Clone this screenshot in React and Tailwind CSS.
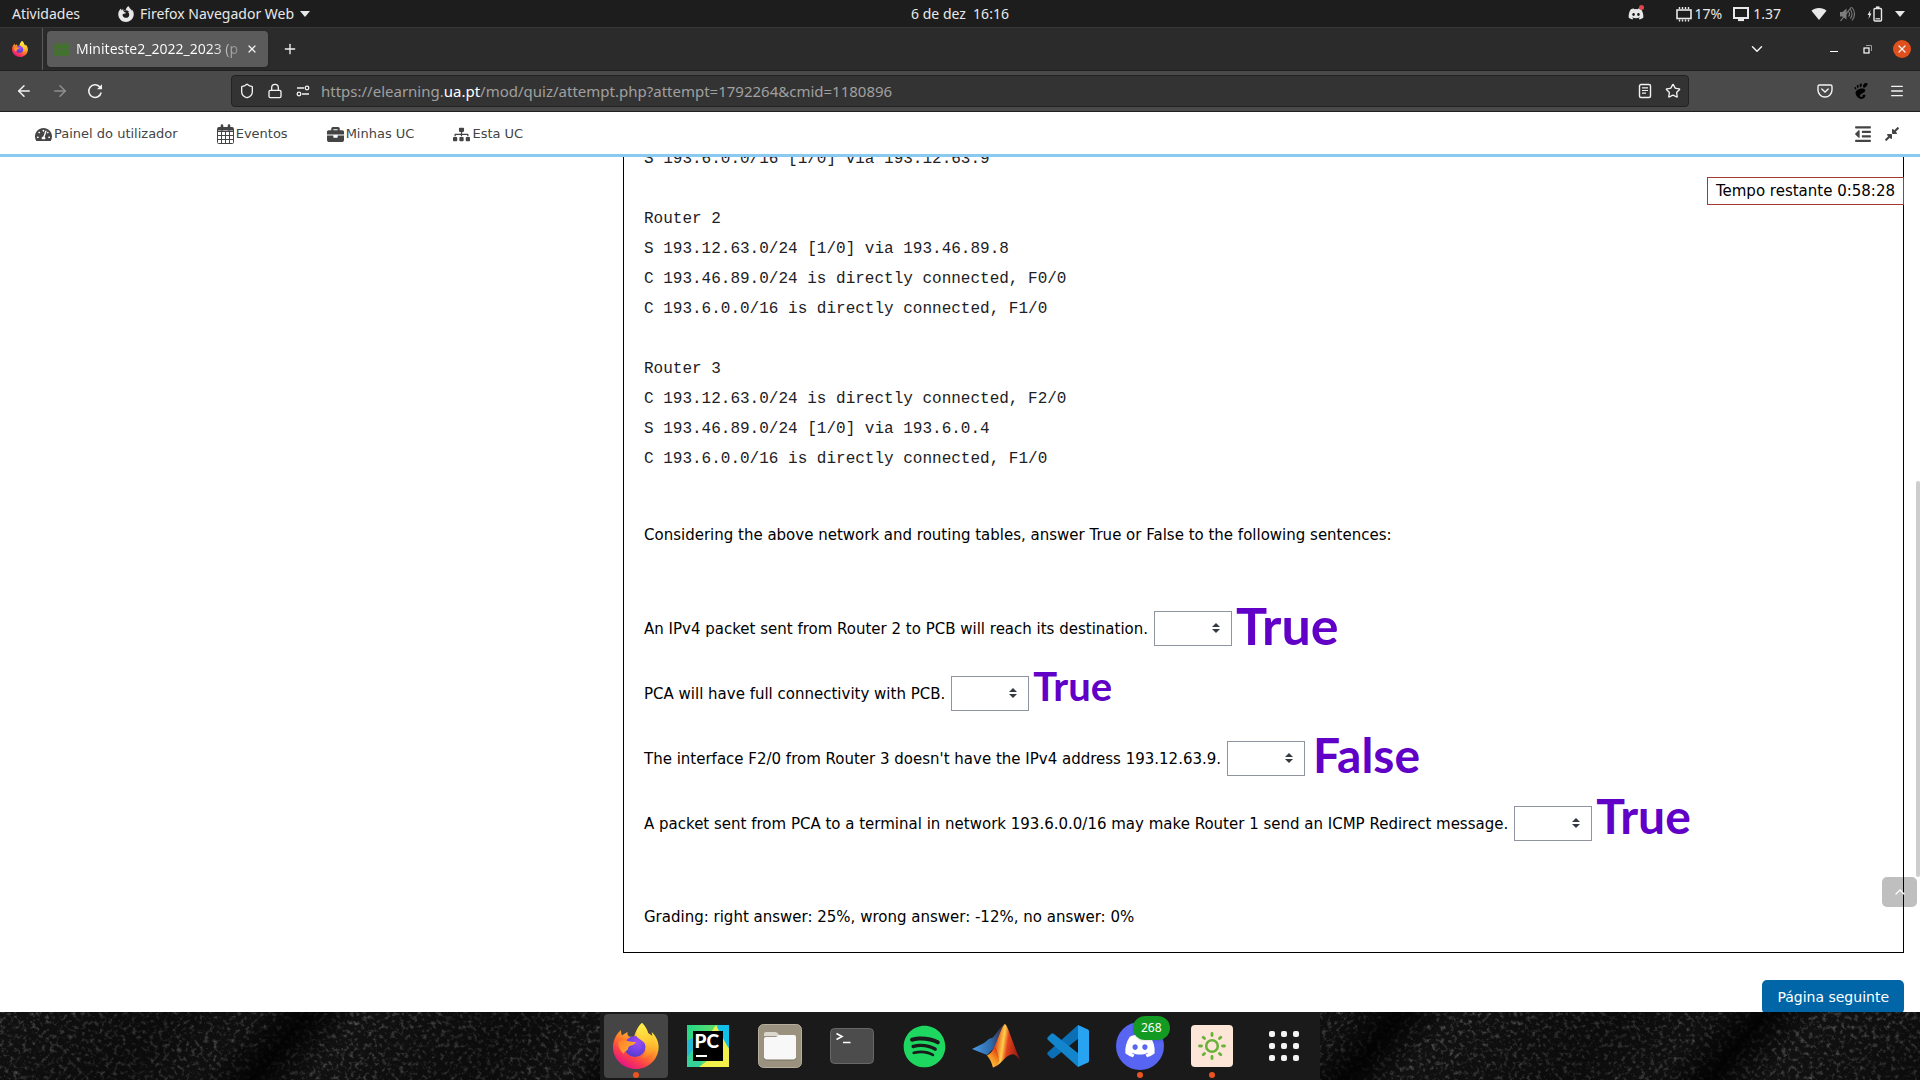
import React from "react";
import {
  FaTachometerAlt,
  FaBriefcase,
  FaSitemap,
  FaOutdent,
  FaCompressAlt,
  FaDiscord,
  FaSpotify,
} from "react-icons/fa";
import { SiFirefoxbrowser, SiGnome } from "react-icons/si";
import {
  ArrowLeft,
  ArrowRight,
  ChevronDown,
  ChevronUp,
  Plus,
  X,
  Star,
  Shield,
  Lock,
  Menu,
} from "lucide-react";

/* ---------- small drawings ---------- */

function FirefoxLogo({ id, className }) {
  return (
    <svg viewBox="0 0 46 46" className={className} aria-hidden="true">
      <defs>
        <linearGradient id={id + "-body"} x1="0.8" y1="0.05" x2="0.25" y2="0.95">
          <stop offset="0" stopColor="#fff44f" />
          <stop offset="0.3" stopColor="#ffbd2e" />
          <stop offset="0.55" stopColor="#ff7a2a" />
          <stop offset="0.78" stopColor="#fb3b50" />
          <stop offset="1" stopColor="#e31587" />
        </linearGradient>
        <linearGradient id={id + "-flame"} x1="0.5" y1="0" x2="0.6" y2="1">
          <stop offset="0" stopColor="#fff04a" />
          <stop offset="0.5" stopColor="#ffcb35" />
          <stop offset="1" stopColor="#ff9a2c" stopOpacity="0.2" />
        </linearGradient>
        <radialGradient id={id + "-globe"} cx="0.6" cy="0.3" r="0.8">
          <stop offset="0" stopColor="#a14cf2" />
          <stop offset="0.5" stopColor="#7542e5" />
          <stop offset="1" stopColor="#4a3cc0" />
        </radialGradient>
        <linearGradient id={id + "-head"} x1="0" y1="0" x2="1" y2="0.6">
          <stop offset="0" stopColor="#ff7d2b" />
          <stop offset="1" stopColor="#ffb02e" />
        </linearGradient>
      </defs>
      <path
        fill={`url(#${id}-body)`}
        d="M29 0c3 3 5 6 6 10 2 1 3 3 4 5 .5-2 .2-4-.4-6C43 13 46 19 45.6 25 45 37 35 46 23 46 10 46 0 36 0 24 0 18 3 11 8 7c0 2 .3 4 1 5.500 1-1 3-2 5.500-3.500-.3 2 .2 3.500 1.500 4.500L21 14c1-5 4-10 8-14z"
      />
      <circle cx="22" cy="23.500" r="10.500" fill={`url(#${id}-globe)`} />
      <path
        fill={`url(#${id}-flame)`}
        d="M29 0c-5 4-7 10-5 14 3 3 8 4 9 10 .6 5-2 9-6 11 8 0 15-6 15-15 0-8-5-8-7-10-1-4-3-7-6-10z"
      />
      <path
        fill={`url(#${id}-head)`}
        d="M5 19c3-2 7-2 10-1 2 .6 5 1 8 1-1 2-2.500 3-5 3.500-2 .5-3 1.500-3 3.500-1 2-4 2-4 5C7 28 5 24 5 19z"
      />
    </svg>
  );
}

function CalendarIcon() {
  return (
    <svg viewBox="0 0 17 20" className="h-5 w-[17px]" fill="none" stroke="currentColor" aria-hidden="true">
      <rect x="0.500" y="3.500" width="16" height="16" rx="1" />
      <path d="M1 7.500h15M1 11.500h15M1 15.500h15M4.500 7v12M8.500 7v12M12.500 7v12" />
      <path d="M1 5h15" strokeWidth="3" />
      <path d="M5 1.500v4M12 1.500v4" strokeWidth="2.600" strokeLinecap="round" />
    </svg>
  );
}

function ReloadIcon() {
  return (
    <svg viewBox="0 0 16 16" className="size-4" fill="none" stroke="currentColor" strokeWidth="1.500" aria-hidden="true">
      <path d="M14.200 9.500A6.300 6.300 0 1 1 12.500 3.600l1.500 1.500" />
      <path d="M15 1.200v5H10z" fill="currentColor" stroke="none" />
    </svg>
  );
}

function PermissionsIcon() {
  return (
    <svg viewBox="0 0 16 16" className="size-4" fill="none" stroke="currentColor" strokeWidth="1.300" aria-hidden="true">
      <path d="M2 5h7M7 11h7" />
      <circle cx="12" cy="5" r="1.800" />
      <circle cx="4" cy="11" r="1.800" />
    </svg>
  );
}

function ReaderIcon() {
  return (
    <svg viewBox="0 0 16 16" className="size-4" fill="none" stroke="currentColor" strokeWidth="1.400" aria-hidden="true">
      <rect x="2.500" y="1.500" width="11" height="13" rx="1.500" />
      <path d="M5 4.800h6M5 7.500h6M5 10.200h4" strokeWidth="1.200" />
    </svg>
  );
}

function PocketIcon() {
  return (
    <svg viewBox="0 0 16 16" className="size-4" fill="none" stroke="currentColor" strokeWidth="1.400" strokeLinecap="round" aria-hidden="true">
      <path d="M2.500 2h11a1.500 1.500 0 0 1 1.500 1.500V7A7 7 0 0 1 1 7V3.500A1.500 1.500 0 0 1 2.500 2z" />
      <path d="M4.800 6l3.200 3 3.200-3" />
    </svg>
  );
}

function ChipIcon() {
  return (
    <svg viewBox="0 0 16 16" className="size-4" fill="none" stroke="currentColor" aria-hidden="true">
      <rect x="1" y="4" width="14" height="8.500" strokeWidth="1.600" />
      <path d="M3.500 1v2M6.500 1v2M9.500 1v2M12.500 1v2M3.500 13.500v2M6.500 13.500v2M9.500 13.500v2M12.500 13.500v2" strokeWidth="1.400" />
    </svg>
  );
}

function MonitorIcon() {
  return (
    <svg viewBox="0 0 16 16" className="size-4" fill="none" stroke="currentColor" aria-hidden="true">
      <rect x="1" y="2" width="14" height="10" strokeWidth="2" />
      <path d="M5 14h6" strokeWidth="2.200" />
    </svg>
  );
}

function WifiIcon() {
  return (
    <svg viewBox="0 0 16 16" className="size-4" fill="currentColor" aria-hidden="true">
      <path d="M8 14L.5 4.700C2.500 3 5 2 8 2s5.500 1 7.500 2.700z" />
    </svg>
  );
}

function MutedIcon() {
  return (
    <svg viewBox="0 0 16 16" className="size-4 text-[#7d7d7d]" fill="none" stroke="currentColor" aria-hidden="true">
      <path d="M1 6h2.500L7.500 2.500v11L3.500 10.500H1z" fill="currentColor" stroke="none" />
      <path d="M9.500 5.500c1.300 1.500 1.300 3.500 0 5M11.300 3.500c2.300 2.500 2.300 6.500 0 9M13 1.500c3.300 3.700 3.300 9.300 0 13" strokeWidth="1.100" />
      <path d="M12.500 1L1.500 15" strokeWidth="1.200" />
    </svg>
  );
}

function BatteryIcon() {
  return (
    <svg viewBox="0 0 16 16" className="size-4" fill="none" stroke="currentColor" aria-hidden="true">
      <path d="M3.500 4L.5 9h1.700L1.500 13l3-5.500H2.800z" fill="currentColor" stroke="none" />
      <rect x="7" y="2.500" width="7.500" height="12.500" rx="1" strokeWidth="1.400" />
      <path d="M9 1.200h3.500" strokeWidth="1.600" />
      <path d="M8.500 12.800h4.500" strokeWidth="1.200" />
    </svg>
  );
}

function CaretDown() {
  return (
    <svg viewBox="0 0 10 6" className="h-[6px] w-[10px]" fill="currentColor" aria-hidden="true">
      <path d="M0 0h10L5 6z" />
    </svg>
  );
}

/* ---------- desktop top bar ---------- */

function TopBar() {
  return (
    <header className="grid h-[27px] shrink-0 grid-cols-[1fr_auto_1fr] items-center bg-[#1d1d1d] text-sm text-[#e8e8e8]">
      <div className="flex items-center pl-3">
        <button>Atividades</button>
        <button className="ml-[38px] flex items-center gap-1.5">
          <SiFirefoxbrowser className="size-4" />
          Firefox Navegador Web
          <CaretDown />
        </button>
      </div>
      <button className="whitespace-pre">6 de dez  16:16</button>
      <div className="flex items-center justify-end pr-[15px]">
        <span className="relative">
          <FaDiscord className="size-4" />
          <span className="absolute -top-px right-0 size-[5px] rounded-full bg-[#e2454c]" />
        </span>
        <span className="ml-8 flex items-center gap-[3px]">
          <ChipIcon />
          17%
        </span>
        <span className="ml-[11px] flex items-center gap-1">
          <MonitorIcon />
          1.37
        </span>
        <button className="ml-[30px] flex items-center gap-3" aria-label="Sistema">
          <WifiIcon />
          <MutedIcon />
          <BatteryIcon />
          <CaretDown />
        </button>
      </div>
    </header>
  );
}

/* ---------- browser chrome ---------- */

function TabStrip() {
  return (
    <div className="flex h-[43px] shrink-0 items-center border-t border-[#383838] bg-[#2b2b2b] text-[#f2f2f2]">
      <div className="flex h-full w-[43px] items-center border-r border-[#5a5a5a] pl-3">
        <FirefoxLogo id="ffs" className="size-4" />
      </div>
      <div className="ml-1 flex h-9 w-[221px] items-center rounded-[4px] bg-[#5b5b5b] pr-2.5 pl-[7px] shadow">
        <svg viewBox="0 0 16 16" className="mr-[6px] size-4 shrink-0" aria-hidden="true">
          <path d="M0 2l3 1 2-2 3 2 3-2 2 1 3-1v14H0z" fill="#4b6b3c" />
          <path d="M1 6h14M3 9v5M6 10h4v3H6zM13 9v5" stroke="#3c7a22" strokeWidth="1.500" fill="none" />
        </svg>
        <span className="flex-1 bg-gradient-to-r from-white from-80% to-white/20 bg-clip-text text-sm whitespace-nowrap text-transparent">
          Miniteste2_2022_2023 (p
        </span>
        <button aria-label="Fechar separador" className="ml-1">
          <X className="size-3" strokeWidth={2.400} />
        </button>
      </div>
      <button aria-label="Novo separador" className="ml-[14px]">
        <Plus className="size-4" />
      </button>
      <div className="ml-auto flex items-center pr-[9px]">
        <button aria-label="Listar separadores" className="mr-16">
          <ChevronDown className="size-[18px]" />
        </button>
        <button aria-label="Minimizar" className="mr-[25px] h-[5px] w-2 border-b border-white" />
        <button aria-label="Restaurar" className="mr-[21px] flex">
          <svg viewBox="0 0 9 9" className="size-[9px]" fill="none" aria-hidden="true">
            <path d="M3 .5h5.500V6" stroke="#9a9a9a" />
            <rect x="1" y="3" width="5" height="5" stroke="#fff" strokeWidth="1.200" />
          </svg>
        </button>
        <button aria-label="Fechar" className="flex size-[18px] items-center justify-center rounded-full bg-[#e0501d]">
          <X className="size-3" strokeWidth={2.600} />
        </button>
      </div>
    </div>
  );
}

function Toolbar() {
  return (
    <div className="flex h-[42px] shrink-0 items-center border-y border-[#1f1f1f] bg-[#4a4a4a] text-[#f2f2f2]">
      <div className="flex w-[231px] items-center gap-[18px] pl-[15px]">
        <button aria-label="Recuar">
          <ArrowLeft className="size-[18px]" strokeWidth={2} />
        </button>
        <button aria-label="Avançar" className="text-[#8f8f8f]">
          <ArrowRight className="size-[18px]" strokeWidth={2} />
        </button>
        <button aria-label="Recarregar">
          <ReloadIcon />
        </button>
      </div>
      <div className="flex h-8 flex-1 items-center rounded-[4px] border border-[#222] bg-[#333] px-[7px]">
        <div className="flex items-center gap-3">
          <Shield className="size-4" />
          <Lock className="size-4" />
          <PermissionsIcon />
        </div>
        <div
          role="textbox"
          aria-label="Endereço"
          tabIndex={0}
          className="ml-[10px] flex-1 overflow-hidden text-[15px] whitespace-nowrap text-[#a0a0a0]"
        >
          https://elearning.<span className="text-white">ua.pt</span>/mod/quiz/attempt.php?attempt=1792264&amp;cmid=1180896
        </div>
        <button aria-label="Vista de leitura" className="mr-3">
          <ReaderIcon />
        </button>
        <button aria-label="Adicionar aos marcadores">
          <Star className="size-4" />
        </button>
      </div>
      <div className="flex w-[231px] items-center justify-end gap-5 pr-[15px]">
        <button aria-label="Pocket">
          <PocketIcon />
        </button>
        <button aria-label="GNOME" className="text-black">
          <SiGnome className="size-4" />
        </button>
        <button aria-label="Menu">
          <Menu className="size-4" />
        </button>
      </div>
    </div>
  );
}

/* ---------- page ---------- */

const NAV = [
  ["Painel do utilizador", <FaTachometerAlt key="i" className="size-[17px]" />],
  ["Eventos", <CalendarIcon key="i" />],
  ["Minhas UC", <FaBriefcase key="i" className="size-[17px]" />],
  ["Esta UC", <FaSitemap key="i" className="size-[17px]" />],
];

function PageNav() {
  return (
    <nav className="flex h-[45px] shrink-0 items-center border-b-[3px] border-[#8ac9f0] pt-0.5 pr-5 pl-[35px] font-['DejaVu_Sans',sans-serif] text-[13px] text-[#444]">
      <div className="flex flex-1 items-center gap-[39px]">
        {NAV.map(([label, icon]) => (
          <a key={label} href="#" className="flex items-center gap-0.5">
            {icon}
            {label}
          </a>
        ))}
      </div>
      <button aria-label="Ocultar blocos">
        <FaOutdent className="size-[18px]" />
      </button>
      <button aria-label="Ecrã normal" className="ml-3">
        <FaCompressAlt className="size-4" />
      </button>
    </nav>
  );
}

const TABLES = `S 193.6.0.0/16 [1/0] via 193.12.63.9

Router 2
S 193.12.63.0/24 [1/0] via 193.46.89.8
C 193.46.89.0/24 is directly connected, F0/0
C 193.6.0.0/16 is directly connected, F1/0

Router 3
C 193.12.63.0/24 is directly connected, F2/0
S 193.46.89.0/24 [1/0] via 193.6.0.4
C 193.6.0.0/16 is directly connected, F1/0`;

const QUESTIONS = [
  { text: "An IPv4 packet sent from Router 2 to PCB will reach its destination.", note: "True", style: "ml-1 mb-2 text-[52px]" },
  { text: "PCA will have full connectivity with PCB.", note: "True", style: "ml-1 mb-4 text-[40px]" },
  { text: "The interface F2/0 from Router 3 doesn't have the IPv4 address 193.12.63.9.", note: "False", style: "ml-2 mb-2 text-5xl" },
  {
    text: "A packet sent from PCA to a terminal in network 193.6.0.0/16 may make Router 1 send an ICMP Redirect message.",
    note: "True",
    style: "ml-1 mb-4 text-5xl",
  },
];

function Question({ index, text, note, style }) {
  const id = `q${index}`;
  return (
    <div className="flex h-[35px] items-center whitespace-nowrap">
      <label htmlFor={id}>{text}</label>
      <span className="relative ml-1.5 flex h-full w-[78px]">
        <select id={id} defaultValue="" className="w-full appearance-none border border-[#8f959e] bg-white px-3">
          <option value=""></option>
          <option>True</option>
          <option>False</option>
        </select>
        <svg viewBox="0 0 8 10" className="pointer-events-none absolute top-3 right-3 h-[10px] w-2" fill="#343a40" aria-hidden="true">
          <path d="M4 0l4 4H0zM4 10l4-4H0z" />
        </svg>
      </span>
      <span className={`font-[Lato,sans-serif] leading-none font-bold text-[#6100c6] ${style}`}>{note}</span>
    </div>
  );
}

function Quiz() {
  return (
    <main className="relative flex min-h-0 flex-1 overflow-hidden font-['DejaVu_Sans',sans-serif] text-[15px] leading-[30px] text-black">
      <aside className="w-[623px] shrink-0" />
      <div className="-mt-[13px] mr-4 flex min-w-0 flex-1 flex-col">
        <section className="border border-t-0 border-black px-5 pb-5">
          <pre className="overflow-visible font-['Liberation_Mono',monospace] text-base leading-[30px] text-[#1d2125]">{TABLES}</pre>
          <p className="mt-[46px]">
            Considering the above network and routing tables, answer True or False to the following sentences:
          </p>
          <div className="mt-[61px] flex flex-col gap-[30px]">
            {QUESTIONS.map((q, i) => (
              <Question key={q.text} index={i + 1} {...q} />
            ))}
          </div>
          <p className="mt-[61px]">Grading: right answer: 25%, wrong answer: -12%, no answer: 0%</p>
        </section>
        <button className="mt-[27px] self-end rounded-[5px] bg-[#0066a8] px-[15px] py-0.5 text-sm leading-[30px] text-white">
          Página seguinte
        </button>
      </div>
      <div className="absolute top-5 right-4 border border-[#a03a32] bg-white px-2 leading-[26px]">
        Tempo restante 0:58:28
      </div>
      <div className="absolute top-[324px] right-0 h-[396px] w-1 rounded bg-[#cdcdcd]" />
      <button
        aria-label="Voltar ao topo"
        className="absolute right-[3px] bottom-[105px] flex h-[30px] w-[35px] items-center justify-center rounded-[5px] bg-black/25 text-white"
      >
        <ChevronUp className="size-4" />
      </button>
    </main>
  );
}

/* ---------- dock ---------- */

function PyCharm() {
  return (
    <svg viewBox="0 0 42 42" className="size-[42px]" aria-hidden="true">
      <defs>
        <linearGradient id="pc-a" x1="0" y1="0" x2="1" y2="0.3">
          <stop offset="0" stopColor="#21d789" />
          <stop offset="1" stopColor="#7fe05c" />
        </linearGradient>
      </defs>
      <rect width="42" height="42" fill="url(#pc-a)" />
      <path d="M0 16l7-4v30H0z" fill="#22b8d0" />
      <path d="M0 32l8-10 8 20H0z" fill="#35d39a" />
      <path d="M26 10l5-10h11v22l-6 4z" fill="#12bfe8" />
      <path d="M22 10l7-10 4 8 9 16v18H12l12-9z" fill="#f3f04c" />
      <rect x="6" y="6" width="30" height="30" fill="#000" />
      <text x="7.500" y="22.500" fill="#fff" fontFamily="Lato, sans-serif" fontWeight="900" fontSize="19">
        PC
      </text>
      <rect x="9" y="30" width="11" height="2" fill="#fff" />
    </svg>
  );
}

function Files() {
  return (
    <svg viewBox="0 0 44 44" className="size-11" aria-hidden="true">
      <rect x="0.500" y="0.500" width="43" height="43" rx="5" fill="#9b917f" stroke="#b5ad9d" />
      <path d="M6 10q0-2 2-2h9q2 0 3 1.500L22 12H6z" fill="#dcd8cf" />
      <path d="M6 15q0-2 2-2h10l3-2h15q2 0 2 2v21q0 2-2 2H8q-2 0-2-2z" fill="#f8f8f8" />
      <path d="M6 34q0 2 2 2h28q2 0 2-2" fill="none" stroke="#7a7161" />
    </svg>
  );
}

function Terminal() {
  return (
    <svg viewBox="0 0 44 36" className="h-9 w-11" fill="none" aria-hidden="true">
      <rect x="0.500" y="0.500" width="43" height="35" rx="4" fill="#4c4c4c" stroke="#686868" />
      <path d="M6.500 5.500l5.500 3-5.500 3M13 14.500h7.500" stroke="#fff" strokeWidth="1.600" />
    </svg>
  );
}

function Matlab() {
  return (
    <svg viewBox="0 0 48 44" className="h-11 w-12" aria-hidden="true">
      <defs>
        <linearGradient id="ml-b" x1="0" y1="0" x2="1" y2="0">
          <stop offset="0" stopColor="#4c9be8" />
          <stop offset="0.600" stopColor="#2c6aa8" />
          <stop offset="1" stopColor="#4a2130" />
        </linearGradient>
        <linearGradient id="ml-o" x1="0" y1="0.300" x2="1" y2="0.500">
          <stop offset="0" stopColor="#5c0f0a" />
          <stop offset="0.250" stopColor="#e2481a" />
          <stop offset="0.480" stopColor="#ffcf4a" />
          <stop offset="0.620" stopColor="#e2431c" />
          <stop offset="1" stopColor="#8f1710" />
        </linearGradient>
        <linearGradient id="ml-y" x1="0" y1="1" x2="0.600" y2="0">
          <stop offset="0" stopColor="#ffe24a" />
          <stop offset="0.600" stopColor="#f58a1f" />
          <stop offset="1" stopColor="#d83a17" />
        </linearGradient>
      </defs>
      <path d="M0 25l12-6c3-2 5-5 8-5 4-3 8-11 12-13.500L26 20 15 31z" fill="url(#ml-b)" />
      <path d="M32.500 0c3 0 6 13 15.500 36-3-4-6-7-10-5-6 2-10 11-17 12.500-1-4-2-8-5-12 8-5 11-24 16.500-31.500z" fill="url(#ml-o)" />
      <path d="M15 31.500c4-2 6-5 8-9 2 4 4 8 4 15-2 3-4 5-6 6-1-4-2.500-8-6-12z" fill="url(#ml-y)" />
    </svg>
  );
}

function VsCode() {
  return (
    <svg viewBox="0 0 42 42" className="size-[42px]" aria-hidden="true">
      <path d="M31 0L1 27c-1 1-1 2 0 3l3 3c1 .6 2 .6 3 0L32 13z" fill="#0a6fb5" />
      <path d="M31 42L1 15c-1-1-1-2 0-3l3-3c1-.6 2-.6 3 0L32 29z" fill="#1385cc" />
      <path d="M31 0l10 4.500q1 .5 1 1.500v30q0 1-1 1.500L31 42z" fill="#27a3f2" />
    </svg>
  );
}

function Brightness() {
  const rays = [0, 45, 90, 135, 180, 225, 270, 315];
  return (
    <svg viewBox="0 0 42 42" className="size-[42px]" fill="none" aria-hidden="true">
      <rect width="42" height="42" rx="4" fill="#fde6d8" />
      <g stroke="#68b23a" strokeLinecap="round">
        <circle cx="21" cy="21" r="5.800" strokeWidth="2.600" />
        {rays.map((a) => (
          <path key={a} d="M21 8.500v2" strokeWidth="2.800" transform={`rotate(${a} 21 21)`} />
        ))}
      </g>
    </svg>
  );
}

function Discord() {
  return (
    <span className="relative flex size-12 items-center justify-center rounded-full bg-[#5865f2]">
      <FaDiscord className="size-8 text-white" />
      <span className="absolute -top-[6px] left-[17px] rounded-full bg-[#129a22] px-[8px] text-xs leading-6 text-white shadow">
        268
      </span>
    </span>
  );
}

function AppGrid() {
  return (
    <span className="grid grid-cols-3 gap-1.5">
      {[0, 1, 2, 3, 4, 5, 6, 7, 8].map((n) => (
        <span key={n} className="size-1.5 rounded-[2px] bg-[#f2f2f2]" />
      ))}
    </span>
  );
}

const DOCK = [
  { name: "Firefox", icon: <FirefoxLogo id="ffd" className="size-[46px]" />, active: true, running: true },
  { name: "PyCharm", icon: <PyCharm /> },
  { name: "Ficheiros", icon: <Files /> },
  { name: "Terminal", icon: <Terminal /> },
  { name: "Spotify", icon: <FaSpotify className="size-[43px] text-[#1ed760]" /> },
  { name: "MATLAB", icon: <Matlab /> },
  { name: "Visual Studio Code", icon: <VsCode /> },
  { name: "Discord", icon: <Discord />, running: true },
  { name: "Brilho", icon: <Brightness />, running: true },
  { name: "Mostrar aplicações", icon: <AppGrid /> },
];

function Wallpaper() {
  return (
    <svg className="absolute inset-0 h-full w-full" aria-hidden="true">
      <defs>
        <filter id="grain" x="0" y="0" width="100%" height="100%">
          <feTurbulence type="fractalNoise" baseFrequency="0.22" numOctaves="3" seed="7" />
          <feColorMatrix values="0 0 0 0 0.500  0 0 0 0 0.500  0 0 0 0 0.500  1.100 0 0 0 -0.560" />
        </filter>
        <linearGradient id="folds" gradientUnits="userSpaceOnUse" x1="0" y1="0" x2="210" y2="180" spreadMethod="repeat">
          <stop offset="0" stopColor="#000" stopOpacity="0" />
          <stop offset="0.450" stopColor="#000" stopOpacity="0.350" />
          <stop offset="0.700" stopColor="#000" stopOpacity="0.100" />
          <stop offset="0.850" stopColor="#000" stopOpacity="0.850" />
          <stop offset="1" stopColor="#000" stopOpacity="0" />
        </linearGradient>
      </defs>
      <rect width="100%" height="100%" fill="#111" />
      <rect width="100%" height="100%" filter="url(#grain)" />
      <rect width="100%" height="100%" fill="url(#folds)" />
    </svg>
  );
}

function Dock() {
  return (
    <footer className="relative flex h-[68px] shrink-0 justify-center bg-[#0d0d0d]">
      <Wallpaper />
      <div className="relative flex bg-[#1a1a1a] pt-0.5">
        {DOCK.map((app) => (
          <button
            key={app.name}
            aria-label={app.name}
            className={`relative mx-1 flex size-16 items-center justify-center rounded ${app.active ? "bg-[#454545]" : ""}`}
          >
            {app.icon}
            {app.running && <span className="absolute bottom-0 size-1.5 rounded-full bg-[#e95420]" />}
          </button>
        ))}
      </div>
    </footer>
  );
}

export default function App() {
  return (
    <div className="flex h-screen flex-col overflow-hidden bg-white font-['Noto_Sans',sans-serif]">
      <TopBar />
      <TabStrip />
      <Toolbar />
      <PageNav />
      <Quiz />
      <Dock />
    </div>
  );
}
